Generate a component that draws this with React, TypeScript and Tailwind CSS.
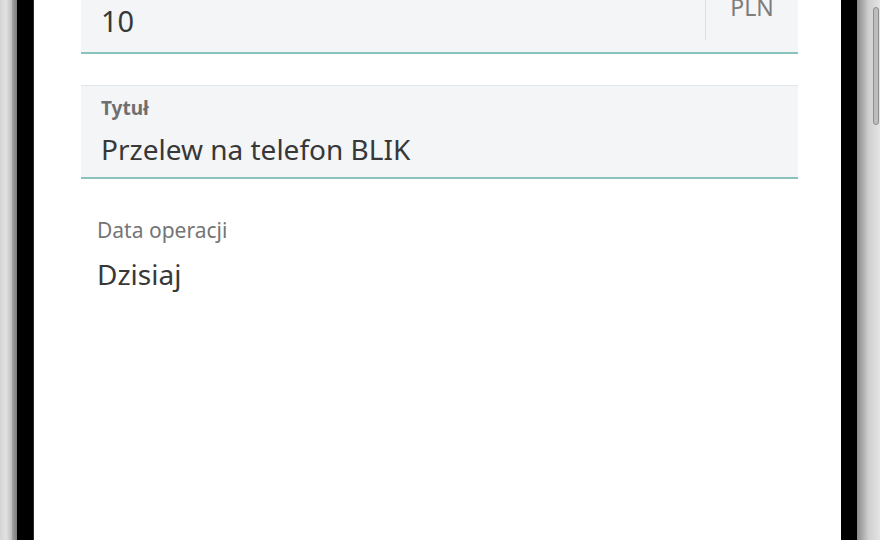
export default function App() {
    return (
        <div className="flex h-[540px] w-[880px] overflow-hidden bg-white" style={{ fontFamily: '"Noto Sans", "Open Sans", sans-serif' }}>
            {/* -----LEFT BEZEL----- */}
            <div className="w-[12px] bg-gradient-to-r from-[#d4d4d4] via-[#e2e2e2] to-[#bdbdbd]" />
            <div className="w-[5px] bg-gradient-to-r from-[#a4a4a4] to-[#7c7c7c]" />
            <div className="w-[16px] bg-black" />
            <div className="w-px bg-[#2a2a2a]" />

            {/* -----SCREEN----- */}
            <div className="flex-1 bg-white pl-[47px] pr-[43px]">
                {/* amount */}
                <div className="-mt-[40px] flex h-[94px] border-b-2 border-[#88c3be] bg-[#f3f5f6]">
                    <div className="flex-1 px-5 pt-[43px]">
                        <div className="text-[29px] leading-[36px] text-[#383838]">10</div>
                    </div>
                    <div className="mb-[12px] flex w-[93px] justify-center border-l border-[#dcdfe1] pt-[32px]">
                        <span className="text-[23px] leading-[30px] text-[#7d7d7d]">PLN</span>
                    </div>
                </div>

                {/* title */}
                <div className="mt-[31px] border-t border-[#e3e6e8] border-b-2 border-b-[#88c3be] bg-[#f3f5f6] px-5 pt-[10px] pb-[10px]">
                    <div className="text-[19px] font-bold leading-[24px] text-[#6f6f6f]">Tytuł</div>
                    <div className="mt-[11px] text-[28px] leading-[36px] text-[#383838]">Przelew na telefon BLIK</div>
                </div>

                {/* date */}
                <div className="mt-[37px] px-4">
                    <div className="text-[21px] leading-[28px] text-[#757575]">Data operacji</div>
                    <div className="mt-[12px] text-[28px] leading-[36px] text-[#383838]">Dzisiaj</div>
                </div>
            </div>

            {/* -----RIGHT BEZEL----- */}
            <div className="w-[16px] bg-black" />
            <div className="relative w-[23px] bg-gradient-to-r from-[#8a8a8a] via-[#cfcfcf] to-[#e4e4e4]">
                <div className="absolute left-[16px] top-[7px] h-[118px] w-[6px] rounded-sm border border-[#8e8e8e] bg-[#bdbdbd]" />
            </div>
        </div>
    );
}
